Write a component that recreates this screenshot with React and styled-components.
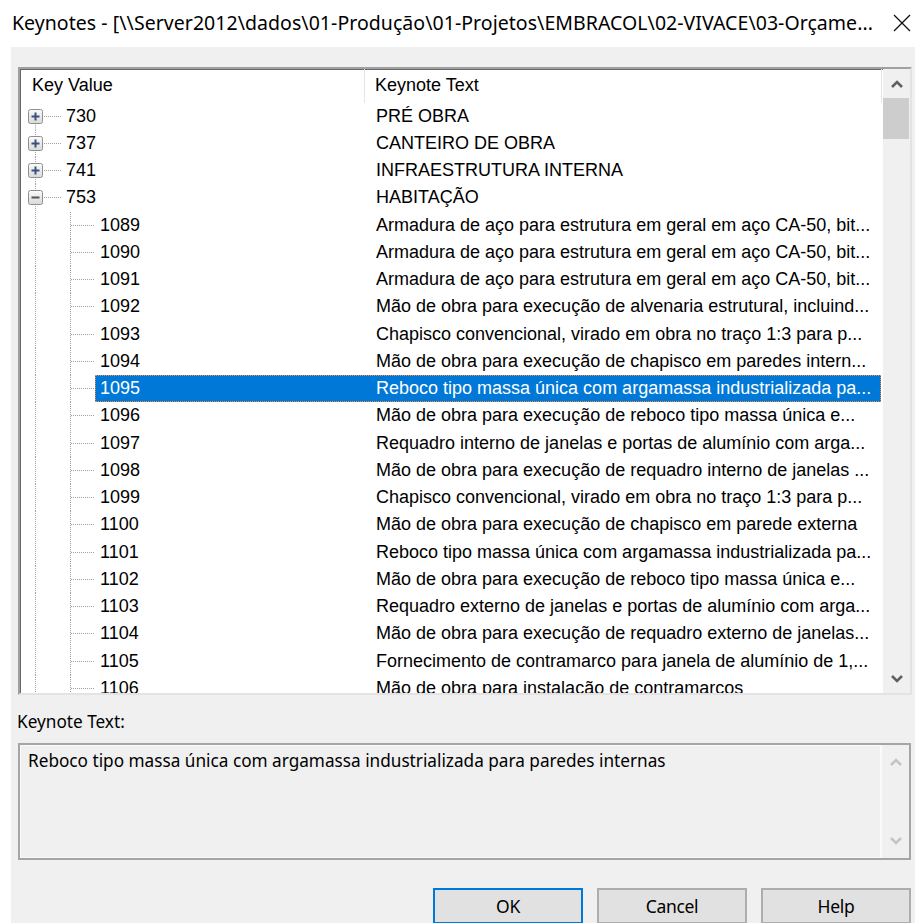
import React from "react";
import styled, { createGlobalStyle } from "styled-components";

const Global = createGlobalStyle`
  html, body { margin: 0; padding: 0; background: #ffffff; }
  body { font-family: "Liberation Sans", Arial, sans-serif; overflow: hidden; }
  * { box-sizing: border-box; }
`;

const ROW_H = 27.25;

const Window = styled.div`
  width: 915px;
  height: 923px;
  display: flex;
  flex-direction: column;
  background: #ffffff;
  overflow: hidden;
`;

const TitleBar = styled.div`
  height: 47px;
  flex: none;
  display: flex;
  align-items: center;
  padding: 0 0 2px 12px;
`;

const Title = styled.div`
  flex: 1;
  font-family: "Noto Sans", "Open Sans", sans-serif;
  font-size: 19.5px;
  letter-spacing: 0.05px;
  color: #000;
  white-space: nowrap;
  overflow: hidden;
`;

const CloseBtn = styled.div`
  width: 26px;
  flex: none;
  display: flex;
  justify-content: center;
  align-items: center;
`;

const Body = styled.div`
  flex: 1;
  margin-left: 11px;
  background: #f0f0f0;
  padding: 20px 3px 0 7px;
  display: flex;
  flex-direction: column;
`;

const ListBox = styled.div`
  height: 628px;
  display: flex;
  border-style: solid;
  border-width: 2px;
  border-color: #a0a0a0 #e3e3e3 #e3e3e3 #a0a0a0;
  box-shadow: inset 1px 1px 0 #696969;
  background: #ffffff;
`;

const ListMain = styled.div`
  flex: 1;
  display: flex;
  flex-direction: column;
  overflow: hidden;
  min-width: 0;
`;

const Header = styled.div`
  height: 33.5px;
  flex: none;
  display: flex;
  font-size: 18px;
  color: #000;
`;

const HeaderCell = styled.div`
  width: ${(p) => (p.$w ? `${p.$w}px` : "auto")};
  flex: ${(p) => (p.$w ? "none" : "1")};
  display: flex;
  align-items: center;
  padding-left: ${(p) => p.$pad}px;
  border-right: 1px solid #e5e5e5;
  margin-right: ${(p) => (p.$w ? 0 : 1)}px;
`;

const Rows = styled.div`
  flex: 1;
  overflow: hidden;
`;

const Row = styled.div`
  height: ${ROW_H}px;
  display: flex;
  align-items: stretch;
`;

const Gutter = styled.svg`
  flex: none;
  display: block;
`;

const RowContent = styled.div`
  flex: 1;
  display: flex;
  align-items: center;
  min-width: 0;
  margin-right: 2px;
  font-size: 18px;
  color: ${(p) => (p.$selected ? "#ffffff" : "#000000")};
  background: ${(p) => (p.$selected ? "#0078d7" : "transparent")};
  outline: ${(p) => (p.$selected ? "1px dotted #ff8c28" : "none")};
  outline-offset: -1px;
`;

const KeyLabel = styled.div`
  width: ${(p) => p.$w}px;
  flex: none;
  padding-left: 5px;
  white-space: nowrap;
`;

const TextLabel = styled.div`
  flex: 1;
  padding-left: 11px;
  white-space: nowrap;
  overflow: hidden;
`;

const ScrollBar = styled.div`
  width: ${(p) => p.$w}px;
  flex: none;
  display: flex;
  flex-direction: column;
  background: #f0f0f0;
  border-left: ${(p) => (p.$disabled ? "2px solid #fafafa" : "none")};
`;

const ArrowBtn = styled.div`
  height: ${(p) => p.$h}px;
  flex: none;
  display: flex;
  align-items: center;
  justify-content: center;
`;

const Track = styled.div`
  flex: 1;
  display: flex;
  flex-direction: column;
`;

const Thumb = styled.div`
  height: 41px;
  margin: 0 1px 0 0;
  background: #cdcdcd;
`;

const Label = styled.div`
  margin: 16px 0 0 -1px;
  height: 20px;
  font-family: "Noto Sans", "Open Sans", sans-serif;
  font-size: 17.2px;
  color: #000;
  display: flex;
  align-items: center;
`;

const TextBox = styled.div`
  margin-top: 12px;
  margin-right: 1px;
  height: 117px;
  display: flex;
  border: 2px solid #a5a5a5;
  background: #f0f0f0;
  box-shadow: inset 0 0 0 1px #fafafa;
`;

const TextContent = styled.div`
  flex: 1;
  padding: 4px 0 0 8px;
  font-family: "Noto Sans", "Open Sans", sans-serif;
  font-size: 17.2px;
  color: #000;
`;

const ButtonRow = styled.div`
  margin-top: 28px;
  margin-right: 1px;
  display: flex;
  justify-content: flex-end;
  gap: 14px;
`;

const Button = styled.div`
  width: 150px;
  height: 36px;
  display: flex;
  align-items: center;
  justify-content: center;
  background: #e1e1e1;
  border: ${(p) => (p.$default ? "2px solid #0078d7" : "2px solid #adadad")};
  font-family: "Noto Sans", "Open Sans", sans-serif;
  font-size: 17.5px;
  letter-spacing: -0.3px;
  color: #000;
`;

const Chevron = ({ dir, color }) => (
  <svg width="14" height="10" viewBox="0 0 14 10">
    <polyline
      points={dir === "up" ? "2,8 7,3 12,8" : "2,2 7,7 12,2"}
      fill="none"
      stroke={color}
      strokeWidth="2.6"
    />
  </svg>
);

const Expander = ({ open, x, y }) => (
  <g>
    <defs>
      <linearGradient id="exp" x1="0" y1="0" x2="0" y2="1">
        <stop offset="0" stopColor="#fbfbfb" />
        <stop offset="1" stopColor="#d9d9d9" />
      </linearGradient>
    </defs>
    <rect x={x + 0.5} y={y + 0.5} width="14" height="14" rx="2" fill="url(#exp)" stroke="#8e8f8f" />
    <line x1={x + 3.5} y1={y + 7.5} x2={x + 11.5} y2={y + 7.5} stroke={open ? "#555" : "#3a4f80"} strokeWidth="2" />
    {!open && <line x1={x + 7.5} y1={y + 3.5} x2={x + 7.5} y2={y + 11.5} stroke="#3a4f80" strokeWidth="2" />}
  </g>
);

const DOT = { stroke: "#a0a0a0", strokeWidth: 1, strokeDasharray: "1 1" };

const RootGutter = ({ open, first }) => {
  const c = ROW_H / 2;
  return (
    <Gutter width="41" height={ROW_H} viewBox={`0 0 41 ${ROW_H}`}>
      <line x1="15.5" y1={first ? c : 0} x2="15.5" y2={ROW_H} {...DOT} />
      <line x1="24" y1={13.5} x2="41" y2={13.5} {...DOT} />
      <Expander open={open} x={8} y={6} />
    </Gutter>
  );
};

const ChildGutter = () => (
  <Gutter width="75" height={ROW_H} viewBox={`0 0 75 ${ROW_H}`}>
    <line x1="15.5" y1="0" x2="15.5" y2={ROW_H} {...DOT} />
    <line x1="50.5" y1="0" x2="50.5" y2={ROW_H} {...DOT} />
    <line x1="51" y1={13.5} x2="75" y2={13.5} {...DOT} />
  </Gutter>
);

const roots = [
  { key: "730", text: "PRÉ OBRA" },
  { key: "737", text: "CANTEIRO DE OBRA" },
  { key: "741", text: "INFRAESTRUTURA INTERNA" },
  { key: "753", text: "HABITAÇÃO", open: true },
];

const children = [
  ["1089", "Armadura de aço para estrutura em geral em aço CA-50, bit..."],
  ["1090", "Armadura de aço para estrutura em geral em aço CA-50, bit..."],
  ["1091", "Armadura de aço para estrutura em geral em aço CA-50, bit..."],
  ["1092", "Mão de obra para execução de alvenaria estrutural, incluind..."],
  ["1093", "Chapisco convencional, virado em obra no traço 1:3 para p..."],
  ["1094", "Mão de obra para execução de chapisco em paredes intern..."],
  ["1095", "Reboco tipo massa única com argamassa industrializada pa..."],
  ["1096", "Mão de obra para execução de reboco tipo massa única e..."],
  ["1097", "Requadro interno de janelas e portas de alumínio com arga..."],
  ["1098", "Mão de obra para execução de requadro interno de janelas ..."],
  ["1099", "Chapisco convencional, virado em obra no traço 1:3 para p..."],
  ["1100", "Mão de obra para execução de chapisco em parede externa"],
  ["1101", "Reboco tipo massa única com argamassa industrializada pa..."],
  ["1102", "Mão de obra para execução de reboco tipo massa única e..."],
  ["1103", "Requadro externo de janelas e portas de alumínio com arga..."],
  ["1104", "Mão de obra para execução de requadro externo de janelas..."],
  ["1105", "Fornecimento de contramarco para janela de alumínio de 1,..."],
  ["1106", "Mão de obra para instalação de contramarcos"],
];

const SELECTED = "1095";

export default function App() {
  return (
    <>
      <Global />
      <Window>
        <TitleBar>
          <Title>
            Keynotes - [\\Server2012\dados\01-Produção\01-Projetos\EMBRACOL\02-VIVACE\03-Orçame...
          </Title>
          <CloseBtn>
            <svg width="18" height="18" viewBox="0 0 18 18">
              <line x1="1" y1="1" x2="17" y2="17" stroke="#111" strokeWidth="1.3" />
              <line x1="17" y1="1" x2="1" y2="17" stroke="#111" strokeWidth="1.3" />
            </svg>
          </CloseBtn>
        </TitleBar>
        <Body>
          <ListBox>
            <ListMain>
              <Header>
                <HeaderCell $w={345} $pad={12}>Key Value</HeaderCell>
                <HeaderCell $pad={10}>Keynote Text</HeaderCell>
              </Header>
              <Rows>
                {roots.map((r, i) => (
                  <React.Fragment key={r.key}>
                    <Row>
                      <RootGutter open={r.open} first={i === 0} />
                      <RowContent>
                        <KeyLabel $w={304}>{r.key}</KeyLabel>
                        <TextLabel>{r.text}</TextLabel>
                      </RowContent>
                    </Row>
                    {r.open &&
                      children.map(([k, t]) => (
                        <Row key={k}>
                          <ChildGutter />
                          <RowContent $selected={k === SELECTED}>
                            <KeyLabel $w={270}>{k}</KeyLabel>
                            <TextLabel>{t}</TextLabel>
                          </RowContent>
                        </Row>
                      ))}
                  </React.Fragment>
                ))}
              </Rows>
            </ListMain>
            <ScrollBar $w={27}>
              <ArrowBtn $h={29}>
                <Chevron dir="up" color="#606060" />
              </ArrowBtn>
              <Track>
                <Thumb />
              </Track>
              <ArrowBtn $h={28}>
                <Chevron dir="down" color="#606060" />
              </ArrowBtn>
            </ScrollBar>
          </ListBox>
          <Label>Keynote Text:</Label>
          <TextBox>
            <TextContent>
              Reboco tipo massa única com argamassa industrializada para paredes internas
            </TextContent>
            <ScrollBar $w={29} $disabled>
              <ArrowBtn $h={34}>
                <Chevron dir="up" color="#c4c4c4" />
              </ArrowBtn>
              <Track />
              <ArrowBtn $h={34}>
                <Chevron dir="down" color="#c4c4c4" />
              </ArrowBtn>
            </ScrollBar>
          </TextBox>
          <ButtonRow>
            <Button $default>OK</Button>
            <Button>Cancel</Button>
            <Button>Help</Button>
          </ButtonRow>
        </Body>
      </Window>
    </>
  );
}
